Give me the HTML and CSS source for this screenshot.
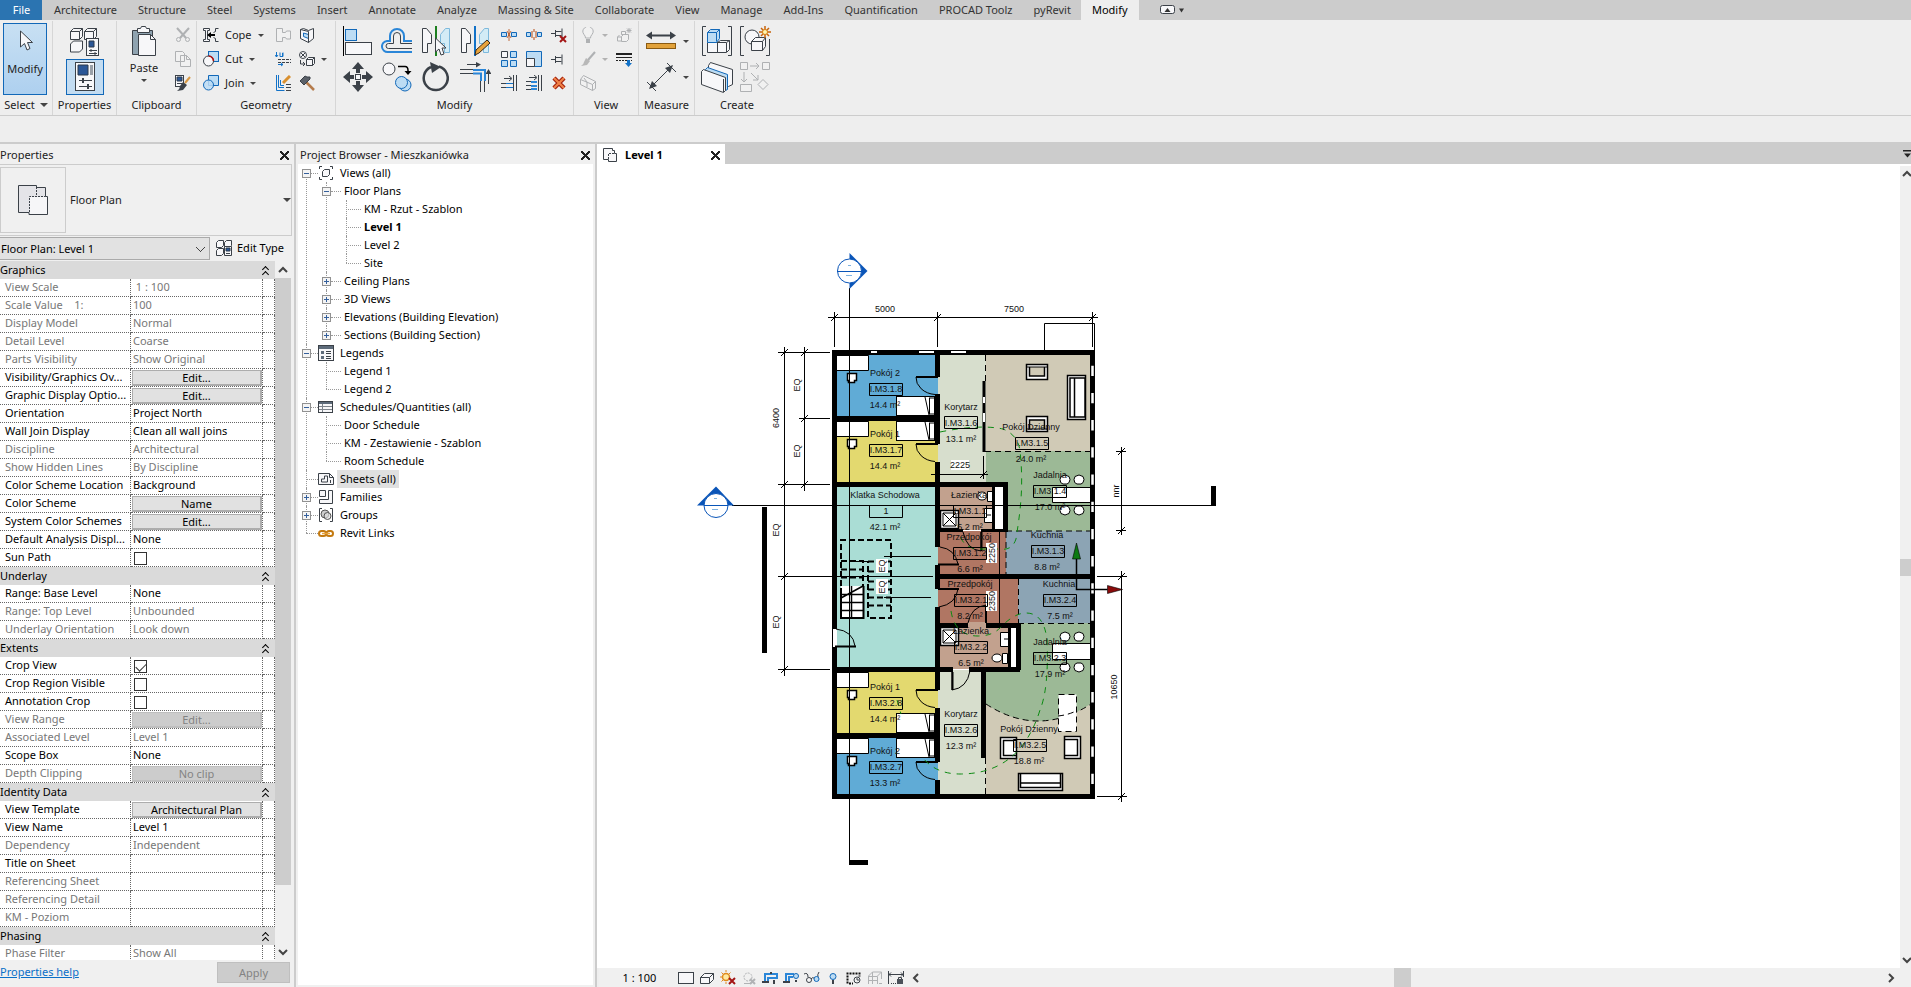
FILE: index.html
```html
<!DOCTYPE html>
<html lang="en">
<head>
<meta charset="utf-8">
<title>Level 1 - Floor Plan</title>
<link rel="stylesheet" href="styles.css">
</head>
<body>
<nav class="tabs" aria-label="Ribbon tabs">
  <button class="tab tab-file">File</button>
  <button class="tab">Architecture</button>
  <button class="tab">Structure</button>
  <button class="tab">Steel</button>
  <button class="tab">Systems</button>
  <button class="tab">Insert</button>
  <button class="tab">Annotate</button>
  <button class="tab">Analyze</button>
  <button class="tab">Massing &amp; Site</button>
  <button class="tab">Collaborate</button>
  <button class="tab">View</button>
  <button class="tab">Manage</button>
  <button class="tab">Add-Ins</button>
  <button class="tab">Quantification</button>
  <button class="tab">PROCAD Toolz</button>
  <button class="tab">pyRevit</button>
  <button class="tab tab-on">Modify</button>
  <button class="tab-toggle" aria-label="Minimize ribbon"><svg width="26" height="12" viewBox="0 0 26 12"><rect class="k" x="1.5" y="1.5" width="14" height="8" rx="2"/><path fill="#333" d="M5.500 8h6l-3-4zM20 4.500h5l-2.500 4z"/></svg></button>
</nav>

<section class="ribbon" aria-label="Modify tools">
  <div class="panel panel-select">
    <div class="panel-body">
      <button class="modify"><svg width="32" height="32" viewBox="0 0 32 32"><path class="k" d="M11.500 7v16l4-3.500 2.500 6.500 3-1.500-2.500-6h5z"/></svg>Modify</button>
    </div>
    <button class="panel-name">Select <i class="down big"></i></button>
  </div>

  <div class="panel">
    <div class="panel-body stack">
      <button class="tool" aria-label="Type properties"><svg width="32" height="32" viewBox="0 0 32 32"><path class="k" d="M1.500 6.500l3-3h9v8l-3 3h-9zM15.500 6.500l3-3h9v8l-3 3h-9zM1.500 19l3-3h9v8l-3 3h-9zM1.500 6.500h9l3-3M15.500 6.500h9l3-3M10.500 6.500v8M24.500 6.500v8"/><rect class="k" x="17.500" y="13.500" width="12" height="17"/><path class="db" d="M20 16h5v6h-5z"/><path class="d" d="M20 25.500h8M20 28.500h8M22 24v3M26 27v3"/></svg></button>
      <button class="tool tool-on" aria-label="Properties"><svg width="32" height="32" viewBox="0 0 32 32"><rect class="k" x="6.500" y="1.500" width="19" height="28"/><path class="db" d="M9 4h10v10H9z"/><path fill="#9aa1a9" d="M21 4h3v10h-3z"/><path class="d" d="M10 19.500h13M10 25.500h13"/><path class="d2" d="M14 17v5M19 23v5"/></svg></button>
    </div>
    <div class="panel-name">Properties</div>
  </div>

  <div class="panel">
    <div class="panel-body clipboard">
      <button class="paste"><svg width="32" height="32" viewBox="0 0 32 32"><path fill="#8fa3b0" stroke="#3b4148" d="M4.500 5.500h20v24h-20z"/><path class="k" d="M9.500 3.500h3l1-2h4l1 2h3v4h-12z"/><path class="k" d="M10.500 9.500h12l5 5v16h-17z"/><path class="d" d="M22.500 9.500v5h5"/></svg>Paste<i class="down"></i></button>
      <button class="tool sm off" aria-label="Cut to clipboard"><svg width="16" height="16" viewBox="0 0 16 16"><path class="d2" d="M2 1l9 10M14 1L5 11"/><circle class="d" cx="3.500" cy="12.500" r="2"/><circle class="d" cx="12.500" cy="12.500" r="2"/></svg></button>
      <button class="tool sm off" aria-label="Copy to clipboard"><svg width="16" height="16" viewBox="0 0 16 16"><path class="k" d="M.5.500h7l2 2v8h-9zM5.500 4.500h6l4 4v7h-10z"/><path class="d" d="M11.500 4.500v4h4"/></svg></button>
      <button class="tool sm" aria-label="Match type"><svg width="16" height="16" viewBox="0 0 16 16"><rect class="k" x=".5" y=".5" width="8" height="11"/><path class="db" d="M2 2h5v4H2z"/><path class="d" d="M2 8.500h5"/><path stroke="#d99a45" stroke-width="2" d="M15 2l-5 6"/><path fill="#3b4148" d="M8 7l4 3-4 5-6 1q3-2 3-5z"/></svg></button>
    </div>
    <div class="panel-name">Clipboard</div>
  </div>

  <div class="panel">
    <div class="panel-body geometry">
      <button class="cmd"><svg width="16" height="16" viewBox="0 0 16 16"><path class="k" d="M.5 1.500h6v2h-2v9h2v2h-6v-2h2v-9h-2z"/><path class="d" d="M15.500 1.500h-3v3l-2 1M15.500 14.500h-3v-3l-2-1"/><path fill="#000" d="M4 8l4-3v2h4v2H8v2z"/></svg>Cope <i class="down"></i></button>
      <button class="tool sm off" aria-label="Join geometry"><svg width="16" height="16" viewBox="0 0 16 16"><path class="k" d="M1.500 1.500h6v4h3l1-1.500h4v8h-4l-1-1.500h-3v4h-6z"/></svg></button>
      <button class="tool sm" aria-label="Split face"><svg width="16" height="16" viewBox="0 0 16 16"><path class="k" d="M1.500 2.500l3-1 5 2 5-2v10l-5 4-8-4z"/><path class="b" d="M4.500 6l5 1.500v4l-5-2z"/><path class="d" d="M1.500 2.500l8 2v11"/></svg></button>
      <button class="cmd"><svg width="16" height="16" viewBox="0 0 16 16"><rect class="b" x="5.500" y=".5" width="10" height="10"/><circle class="k" cx="5.500" cy="10" r="5"/><path d="M5.500 5a5 5 0 0 1 5 5" fill="none" stroke="#b01010" stroke-width="1.500"/></svg>Cut <i class="down"></i></button>
      <button class="tool sm" aria-label="Wall opening"><svg width="16" height="16" viewBox="0 0 16 16"><path class="bl" d="M1.500 1v5M0 4l1.500 2L3 4M5 1.500v4h3v-4M7.500 2v3M3 13.500h5M6 12l2 1.500L6 15"/><path class="d" d="M3 8.500h13M3 11.500h13" stroke-dasharray="3 1"/></svg></button>
      <button class="tool sm more" aria-label="Unjoin"><svg width="16" height="16" viewBox="0 0 16 16"><circle class="k" cx="4" cy="4" r="3.500"/><path class="d" d="M2 2l4 4M6 2L2 6"/><path class="d" d="M1.500 9v4h4M4 11l2 2-2 2"/><path class="k" d="M7.500 8.500l2-2h6v6l-2 2h-6zM7.500 8.500h6v6M13.500 8.500l2-2"/></svg><i class="down"></i></button>
      <button class="cmd"><svg width="16" height="16" viewBox="0 0 16 16"><path class="b" d="M5.500.500h10v10h-10z"/><circle class="b" cx="5.500" cy="10" r="5" fill-opacity=".85"/></svg>Join <i class="down"></i></button>
      <button class="tool sm" aria-label="Beam joins"><svg width="16" height="16" viewBox="0 0 16 16"><path class="bl" d="M3.500 0v12.500H9M5.500 5v5.500H9M1.500 0v15.500h8"/><path class="d" d="M11 9.500h5M11 12.500h5M11 15.500h5"/><path stroke="#d9902f" stroke-width="3" d="M15 1L8 8"/></svg></button>
      <button class="tool sm" aria-label="Demolish"><svg width="16" height="16" viewBox="0 0 16 16"><path stroke="#b57b4b" stroke-width="2.500" d="M7 7l8 8"/><path fill="#5a6068" stroke="#3b4148" d="M1 6l5-5 2 1h3v2L5 10z"/></svg></button>
    </div>
    <div class="panel-name">Geometry</div>
  </div>

  <div class="panel">
    <div class="panel-body modify-tools">
      <div class="bigs">
        <button class="tool" aria-label="Align"><svg width="32" height="32" viewBox="0 0 32 32"><path d="M1.500 1v30" stroke="#000"/><rect class="b" x="3.500" y="4.500" width="11" height="11"/><rect class="k" x="3.500" y="17.500" width="26" height="12"/></svg></button>
        <button class="tool" aria-label="Offset"><svg width="32" height="32" viewBox="0 0 32 32"><path class="bl2" d="M31 27H7a5.500 5.500 0 0 1-1-11h3V11a7 7 0 0 1 14 0v5h8"/><path class="d" d="M31 23.500H7.500a2.500 2.500 0 0 1 0-5h5V11a3.500 3.500 0 0 1 7 0v7.500H31"/></svg></button>
        <button class="tool" aria-label="Mirror by pick axis"><svg width="32" height="32" viewBox="0 0 32 32"><path class="k" d="M2.500 3.500h4l5 6v9h-4v9h-5z"/><path class="b pale" d="M29.500 3.500h-4l-5 6v9h4v9h5z"/><path stroke="#1d8020" stroke-width="2" d="M16 1v30"/><path class="k" d="M15.500 13v14l3.500-3 2 6 3-1-2-6h4z"/></svg></button>
        <button class="tool" aria-label="Mirror by drawn axis"><svg width="32" height="32" viewBox="0 0 32 32"><path class="k" d="M2.500 3.500h4l5 6v9h-4v9h-5z"/><path class="b pale" d="M29.500 3.500h-4l-5 6v9h4v9h5z"/><path stroke="#1272c8" stroke-width="2" d="M16 1v30"/><path fill="#e8a33b" stroke="#3b2a18" d="M16 30l1-5 11-10 3 3-11 10z"/></svg></button>
        <button class="tool" aria-label="Move"><svg width="32" height="32" viewBox="0 0 32 32"><path fill="#3b4148" d="M16 1l6 7h-4v4h-4V8h-4zM16 31l6-7h-4v-4h-4v4h-4zM1 16l7-6v4h4v4H8v4zM31 16l-7-6v4h-4v4h4v4z"/><rect class="k" x="13.500" y="13.500" width="5" height="5"/></svg></button>
        <button class="tool" aria-label="Copy"><svg width="32" height="32" viewBox="0 0 32 32"><circle class="k" cx="8" cy="8" r="6"/><path d="M17 5.500h7q3 0 3 4v2" stroke="#000" stroke-width="1.500" fill="none"/><path d="M23.500 10h7L27 14z"/><circle class="b" cx="24" cy="24" r="6"/><circle class="b" cx="20.500" cy="21.500" r="6"/></svg></button>
        <button class="tool" aria-label="Rotate"><svg width="32" height="32" viewBox="0 0 32 32"><path d="M19 5.500A12 12 0 1 1 11 6" stroke="#3b4148" stroke-width="2.500" fill="none"/><path fill="#3b4148" d="M10 1l11 5-9 6z"/></svg></button>
        <button class="tool" aria-label="Trim to corner"><svg width="32" height="32" viewBox="0 0 32 32"><path class="d" d="M1 8.500h13M1 12.500h13M21.500 19v12M25.500 19v12M8 3.500h12M29.500 10v13"/><path fill="#3b4148" d="M17 1l5 2.500-5 3zM26.500 13l3-5 3 5z"/><path class="bl2" d="M14 9h12v11M14 12.500h8V20" /></svg></button>
      </div>
      <div class="smalls">
        <button class="tool sm" aria-label="Split element"><svg width="16" height="16" viewBox="0 0 16 16"><path class="b" d="M.5 5.500h5v4h-5zM10.500 5.500h5v4h-5z"/><path stroke="#b34a12" d="M8 2v12M6 4l4 7M10 4l-4 7" stroke-width=".8"/></svg></button>
        <button class="tool sm" aria-label="Split with gap"><svg width="16" height="16" viewBox="0 0 16 16"><path class="b" d="M.5 5.500h4v4h-4zM11.500 5.500h4v4h-4z"/><path stroke="#b34a12" d="M6 4v7M10 4v7M8 2v3M8 10v3"/></svg></button>
        <button class="tool sm" aria-label="Unpin"><svg width="16" height="16" viewBox="0 0 16 16"><path class="k" d="M0 6.500h4M4.500 3v7M4.500 4.500h6M4.500 8.500h6M11 1.500v10"/><path class="x" d="M9 9l6 6M15 9l-6 6"/></svg></button>
        <button class="tool sm" aria-label="Array"><svg width="16" height="16" viewBox="0 0 16 16"><path class="k" d="M.5.500h6v6h-6z"/><path class="b" d="M9.500.500h6v6h-6zM.5 9.500h6v6h-6zM9.500 9.500h6v6h-6z"/></svg></button>
        <button class="tool sm" aria-label="Scale"><svg width="16" height="16" viewBox="0 0 16 16"><path class="b" d="M.5.500h15v15h-15z"/><path class="k" d="M.5 7.500h8v8h-8z"/></svg></button>
        <button class="tool sm" aria-label="Pin"><svg width="16" height="16" viewBox="0 0 16 16"><path class="k" d="M0 8.500h4M4.500 5v7M4.500 6.500h6M4.500 10.500h6M11 3.500v10"/></svg></button>
        <button class="tool sm" aria-label="Trim single element"><svg width="16" height="16" viewBox="0 0 16 16"><path class="d" d="M3 3.500h7M12.500 0v16M15.500 0v16M0 8.500h5M0 12.500h5M8 1l3 2.500L8 6"/><path class="bl" d="M5 8.500h7M5 12.500h7"/></svg></button>
        <button class="tool sm" aria-label="Trim multiple elements"><svg width="16" height="16" viewBox="0 0 16 16"><path class="d" d="M3 2.500h7M12.500 0v16M15.500 0v16M0 6.500h5M0 10.500h5M0 14.500h5M8 0l3 2.500L8 5"/><path class="bl2" d="M5 7h6M5 11h6M5 14h6"/></svg></button>
        <button class="tool sm" aria-label="Delete"><svg width="16" height="16" viewBox="0 0 16 16"><path d="M3 3l10 10M13 3L3 13" stroke="#a3200c" stroke-width="4.500"/><path d="M3 3l10 10M13 3L3 13" stroke="#f08248" stroke-width="2.200"/></svg></button>
      </div>
    </div>
    <div class="panel-name">Modify</div>
  </div>

  <div class="panel">
    <div class="panel-body view-tools">
      <button class="tool sm more off" aria-label="Hide in view"><svg width="16" height="16" viewBox="0 0 16 16"><path class="k" d="M5.500 11q0-2-1.500-3.500a5 5 0 1 1 8 0Q10.500 9 10.500 11z"/><path class="d2" d="M6 13h4M6 15h4"/></svg><i class="down"></i></button>
      <button class="tool sm off" aria-label="Displace elements"><svg width="16" height="16" viewBox="0 0 16 16"><path class="k" d="M5.500 9.500l2-2h5v5l-2 2h-5zM1.500 10l2-2M1.500 10h4v4h-4zM5.500 4.500h4v3h-4zM13 1v5M10.500 3.500h5M11 1.500l4 4M15 1.500l-4 4"/></svg></button>
      <button class="tool sm more off" aria-label="Override graphics"><svg width="16" height="16" viewBox="0 0 16 16"><path class="d2" d="M15 1L8 9"/><path fill="#555" d="M6 7l4 3-3 4-6 1q3-2 3-4z"/></svg><i class="down"></i></button>
      <button class="tool sm" aria-label="Linework"><svg width="16" height="16" viewBox="0 0 16 16"><path stroke="#222" stroke-width="2" d="M0 3h16"/><path stroke="#222" d="M0 6.500h16"/><path stroke="#222" stroke-dasharray="2 1" d="M0 9.500h16"/><path fill="#1272c8" d="M11 9h3v3h2l-3.500 4L9 12h2z"/></svg></button>
      <button class="tool sm off" aria-label="Selection box"><svg width="16" height="16" viewBox="0 0 16 16"><path class="k" d="M.5 4.500l3-4 12 6v7l-3 2-12-6zM.5 4.500l12 5v6M12.500 9.500l3-3M4 3l3 4v5"/></svg></button>
    </div>
    <div class="panel-name">View</div>
  </div>

  <div class="panel">
    <div class="panel-body measure">
      <button class="tool more" aria-label="Measure"><svg width="32" height="32" viewBox="0 0 32 32"><path class="d2" d="M5 10.500h22"/><path fill="#3b4148" d="M1 10.500l6-4v8zM31 10.500l-6-4v8z"/><rect x="1.500" y="18.500" width="29" height="5" fill="#e2a23a" stroke="#8a5a12"/></svg><i class="down"></i></button>
      <button class="tool more" aria-label="Aligned dimension"><svg width="32" height="32" viewBox="0 0 32 32"><path class="d" d="M7 25L25 7M2 21l9 9M22 2l9 9"/><path fill="#3b4148" d="M4 28l3-8 5 5zM28 4l-8 3 5 5z"/></svg><i class="down"></i></button>
    </div>
    <div class="panel-name">Measure</div>
  </div>

  <div class="panel panel-last">
    <div class="panel-body create">
      <button class="tool" aria-label="Create assembly"><svg width="32" height="32" viewBox="0 0 32 32"><path class="d" d="M5 1.500H1.500v29H5M27 1.500h3.500v29H27"/><path class="k" d="M6.500 17.500h10v10h-10zM16.500 17.500l3-2h9v9l-3 3h-9zM25.500 18v9M16.500 17.500h9l3-2"/><path class="b" d="M6.500 7.500l3-3h9v9l-3 4h-9zM6.500 7.500h9v9M15.500 7.500l3-3"/></svg></button>
      <button class="tool" aria-label="Create group"><svg width="32" height="32" viewBox="0 0 32 32"><path class="d" d="M5 1.500H1.500v29H5M27 30.500h3.500V14"/><circle class="k" cx="13" cy="12" r="7"/><path class="k" d="M12.500 16.500l4-4h10v9l-3 4h-11zM12.500 16.500h11v9M23.500 16.500l3-4"/><path d="M26 1v12M20 7h12M22 3l8 8M30 3l-8 8" stroke="#c8640c" stroke-width="1.500"/><circle cx="26" cy="7" r="2.500" fill="#fff6b0" stroke="#d98012"/></svg></button>
      <button class="tool" aria-label="Create parts"><svg width="32" height="32" viewBox="0 0 32 32"><path class="k" d="M7.500 4.500l2-3 22 7v15l-4 2-20-7z"/><path class="b" d="M4.500 8.500l2-2 20 7v15l-2 1-20-7z"/><path class="k" d="M.5 10.500l2-2 22 8v13l-2 2-22-8zM22.500 18v13"/></svg></button>
      <button class="tool off" aria-label="Create similar"><svg width="32" height="32" viewBox="0 0 32 32"><path class="k" d="M1.500 1.500h7v7h-7zM23.500 1.500h7v7h-7zM1.500 23.500h11v7h-11zM19 23.500l5-5 5 5-5 5z"/><path class="d" d="M11 5h9M17 2l3 3-3 3M5 11v10M2 18l3 3 3-3M12 12l7 7M19 14v5h-5"/></svg></button>
    </div>
    <div class="panel-name">Create</div>
  </div>
</section>

<div class="options"></div>

<main class="work">
  <section class="dock" aria-label="Properties">
    <header class="dock-title"><span>Properties</span><button class="close" aria-label="Close properties"></button></header>
    <button class="type-picker">
      <span class="thumb"><svg width="32" height="32" viewBox="0 0 32 32"><path fill="#e4e4e8" stroke="#3b4148" d="M1.500 1.500h18v2h9v9h2v18h-18.500v-2h-10.500z"/><path fill="#f6f6f8" d="M13 13h17v17H13z"/><path class="d" stroke-dasharray="2 1" d="M19.500 3v10M12.500 28V12.500h16"/></svg></span>
      <span class="type-name">Floor Plan</span><i class="down big"></i>
    </button>
    <div class="filter">
      <select aria-label="Element filter"><option>Floor Plan: Level 1</option></select>
      <button class="edit-type"><svg width="16" height="16" viewBox="0 0 16 16"><path class="k" d="M.5 2.500l2-2h5v5l-2 2h-5zM8.500 2.500l2-2h5v5l-2 2h-5zM.5 10.500l2-2h5v5l-2 2h-5z"/><path class="k" d="M8.500 6.500h7v9h-7z"/><path class="db" d="M10 8h4v3h-4z"/><path class="d" d="M10 13.500h4"/></svg>Edit Type</button>
    </div>
    <div class="grid-wrap">
      <div class="grid-clip">
      <table class="grid">
        <colgroup><col class="c-name"><col class="c-value"><col class="c-link"></colgroup>
        <tbody>
        <tr class="group"><th colspan="3">Graphics<b></b></th></tr>
        <tr class="ro"><td>View Scale</td><td>&nbsp;1 : 100</td><td></td></tr>
        <tr class="ro"><td>Scale Value &nbsp;&nbsp; 1:</td><td>100</td><td></td></tr>
        <tr class="ro"><td>Display Model</td><td>Normal</td><td></td></tr>
        <tr class="ro"><td>Detail Level</td><td>Coarse</td><td></td></tr>
        <tr class="ro"><td>Parts Visibility</td><td>Show Original</td><td></td></tr>
        <tr><td>Visibility/Graphics Ov...</td><td><button>Edit...</button></td><td></td></tr>
        <tr><td>Graphic Display Optio...</td><td><button>Edit...</button></td><td></td></tr>
        <tr><td>Orientation</td><td>Project North</td><td></td></tr>
        <tr><td>Wall Join Display</td><td>Clean all wall joins</td><td></td></tr>
        <tr class="ro"><td>Discipline</td><td>Architectural</td><td></td></tr>
        <tr class="ro"><td>Show Hidden Lines</td><td>By Discipline</td><td></td></tr>
        <tr><td>Color Scheme Location</td><td>Background</td><td></td></tr>
        <tr><td>Color Scheme</td><td><button>Name</button></td><td></td></tr>
        <tr><td>System Color Schemes</td><td><button>Edit...</button></td><td></td></tr>
        <tr><td>Default Analysis Displ...</td><td>None</td><td></td></tr>
        <tr><td><label for="sun">Sun Path</label></td><td><input id="sun" type="checkbox"></td><td></td></tr>
        <tr class="group"><th colspan="3">Underlay<b></b></th></tr>
        <tr><td>Range: Base Level</td><td>None</td><td></td></tr>
        <tr class="ro"><td>Range: Top Level</td><td>Unbounded</td><td></td></tr>
        <tr class="ro"><td>Underlay Orientation</td><td>Look down</td><td></td></tr>
        <tr class="group"><th colspan="3">Extents<b></b></th></tr>
        <tr><td><label for="crop">Crop View</label></td><td><input id="crop" type="checkbox" checked></td><td></td></tr>
        <tr><td><label for="region">Crop Region Visible</label></td><td><input id="region" type="checkbox"></td><td></td></tr>
        <tr><td><label for="anno">Annotation Crop</label></td><td><input id="anno" type="checkbox"></td><td></td></tr>
        <tr class="ro"><td>View Range</td><td><button disabled>Edit...</button></td><td></td></tr>
        <tr class="ro"><td>Associated Level</td><td>Level 1</td><td></td></tr>
        <tr><td>Scope Box</td><td>None</td><td></td></tr>
        <tr class="ro"><td>Depth Clipping</td><td><button disabled>No clip</button></td><td></td></tr>
        <tr class="group"><th colspan="3">Identity Data<b></b></th></tr>
        <tr><td>View Template</td><td><button>Architectural Plan</button></td><td></td></tr>
        <tr><td>View Name</td><td>Level 1</td><td></td></tr>
        <tr class="ro"><td>Dependency</td><td>Independent</td><td></td></tr>
        <tr><td>Title on Sheet</td><td></td><td></td></tr>
        <tr class="ro"><td>Referencing Sheet</td><td></td><td></td></tr>
        <tr class="ro"><td>Referencing Detail</td><td></td><td></td></tr>
        <tr class="ro"><td>KM - Poziom</td><td></td><td></td></tr>
        <tr class="group"><th colspan="3">Phasing<b></b></th></tr>
        <tr class="ro"><td>Phase Filter</td><td>Show All</td><td></td></tr>
        </tbody>
      </table>
      </div>
      <div class="vbar"><svg width="16" height="17" viewBox="0 0 16 17"><path class="chev" d="M4 11l4-4 4 4"/></svg><span class="thumb-v"></span><svg width="16" height="17" viewBox="0 0 16 17"><path class="chev" d="M4 7l4 4 4-4"/></svg></div>
    </div>
    <footer class="dock-foot"><a href="#help">Properties help</a><button disabled>Apply</button></footer>
  </section>

  <section class="dock" aria-label="Project Browser">
    <header class="dock-title pb"><span>Project Browser - Mieszkaniówka</span><button class="close" aria-label="Close project browser"></button></header>
    <ul class="tree">
      <li><div class="node"><button class="exp" aria-label="Collapse"></button><i></i><svg width="16" height="16" viewBox="0 0 16 16"><path class="d" d="M4 1.500H1.500V4M12 1.500h2.500V4M4 14.500H1.500V12M12 14.500h2.500V12"/><path class="k" d="M4.500 6.500l2-2h5v5l-2 2h-5z"/></svg><span>Views (all)</span></div>
        <ul>
          <li><div class="node"><button class="exp" aria-label="Collapse"></button><i></i><span>Floor Plans</span></div>
            <ul>
              <li><div class="node"><i></i><span>KM - Rzut - Szablon</span></div></li>
              <li><div class="node"><i></i><span><b>Level 1</b></span></div></li>
              <li><div class="node"><i></i><span>Level 2</span></div></li>
              <li><div class="node"><i></i><span>Site</span></div></li>
            </ul></li>
          <li><div class="node"><button class="exp plus" aria-label="Expand"></button><i></i><span>Ceiling Plans</span></div></li>
          <li><div class="node"><button class="exp plus" aria-label="Expand"></button><i></i><span>3D Views</span></div></li>
          <li><div class="node"><button class="exp plus" aria-label="Expand"></button><i></i><span>Elevations (Building Elevation)</span></div></li>
          <li><div class="node"><button class="exp plus" aria-label="Expand"></button><i></i><span>Sections (Building Section)</span></div></li>
        </ul></li>
      <li><div class="node"><button class="exp" aria-label="Collapse"></button><i></i><svg width="16" height="16" viewBox="0 0 16 16"><rect class="k" x=".5" y=".5" width="15" height="15"/><path fill="#5d6b7a" d="M1 1h14v3H1zM3 6h3v3H3zM3 11h3v3H3z"/><path class="d" d="M8 6.500h5M8 8.500h5M8 11.500h5M8 13.500h5"/></svg><span>Legends</span></div>
        <ul>
          <li><div class="node"><i></i><span>Legend 1</span></div></li>
          <li><div class="node"><i></i><span>Legend 2</span></div></li>
        </ul></li>
      <li><div class="node"><button class="exp" aria-label="Collapse"></button><i></i><svg width="16" height="16" viewBox="0 0 16 16"><rect class="k" x=".5" y="2.500" width="14" height="11"/><path fill="#5d6b7a" d="M1 3h13v2H1z"/><path stroke="#7d848c" d="M4.500 5v8M1 7.500h13M1 10.500h13"/></svg><span>Schedules/Quantities (all)</span></div>
        <ul>
          <li><div class="node"><i></i><span>Door Schedule</span></div></li>
          <li><div class="node"><i></i><span>KM - Zestawienie - Szablon</span></div></li>
          <li><div class="node"><i></i><span>Room Schedule</span></div></li>
        </ul></li>
      <li><div class="node"><i></i><svg width="16" height="16" viewBox="0 0 16 16"><path class="k" d="M.5 2.500h11l4 4v7h-15z"/><path class="d" d="M11.500 2.500v4h4M3.500 8h3V5h3v6h-6zM12.500 9v3"/></svg><span class="picked">Sheets (all)</span></div></li>
      <li><div class="node"><button class="exp plus" aria-label="Expand"></button><i></i><svg width="16" height="16" viewBox="0 0 16 16"><path class="k" d="M1.500 1.500h6v6h-6zM10.500 1.500h4v13h-13v-4h9z"/></svg><span>Families</span></div></li>
      <li><div class="node"><button class="exp plus" aria-label="Expand"></button><i></i><svg width="16" height="16" viewBox="0 0 16 16"><path class="d" d="M4 1.500H1.500v13H4M12 1.500h2.500v13H12"/><circle cx="7" cy="7" r="4" fill="#ccc" stroke="#555"/><circle cx="9.500" cy="9" r="3.500" fill="#ddd" fill-opacity=".7" stroke="#555"/></svg><span>Groups</span></div></li>
      <li><div class="node"><i></i><svg width="16" height="16" viewBox="0 0 16 16"><rect x="1" y="6" width="7" height="5" rx="2.500" fill="none" stroke="#c47a10" stroke-width="2"/><rect x="8.500" y="6" width="6.500" height="5" rx="2.500" fill="none" stroke="#c47a10" stroke-width="2"/><path d="M4 8.500h8" stroke="#e8a33b" stroke-width="1.500"/></svg><span>Revit Links</span></div></li>
    </ul>
  </section>

  <section class="view" aria-label="Drawing area">
    <header class="view-tabs">
      <div class="view-tab"><svg width="16" height="16" viewBox="0 0 16 16"><path class="k" d="M1.500 1.500h9v2h2v3h2v8h-8v-2h-5z"/><path class="d" stroke-dasharray="2 1" d="M6.500 12V6.500h7"/></svg><b>Level 1</b><button class="close" aria-label="Close view"></button></div>
      <button class="overflow" aria-label="More views"><svg width="8" height="10" viewBox="0 0 8 10"><path d="M0 1h8v1.500H0zM1 4.500h7l-3.500 4z" fill="#222"/></svg></button>
    </header>
    <div class="canvas">
      <div class="sheet">
      <svg class="plan" width="540" height="640" viewBox="690 240 540 640" role="img" aria-label="Floor plan of Level 1">
        <defs>
          <g id="seat"><path d="M-4-3.500q4-3 8 0l1 3q-.500 4-3 4.500h-4q-3-.500-3-4.500z" class="w"/></g>
          <g id="seat2"><path d="M-4 3.500q4 3 8 0l1-3q-.500-4-3-4.500h-4q-3 .500-3 4.500z" class="w"/></g>
          <g id="stool"><path d="M.5.500h9v7h-2v2h-6v-2h-1z" class="w" stroke-width="1.500"/></g>
          <g id="bed"><rect class="w" x=".5" y=".5" width="38" height="19"/><path class="n" d="M29 1l4 18"/><rect class="w" x="33.500" y="2" width="5" height="16"/></g>
          <g id="door"><path class="n" d="M-21 0a21 17 0 0 0 19 17.500"/><path stroke="#000" stroke-width="2" d="M-21 0H1"/></g>
          <g id="arm"><path class="w" d="M.5.500h21v15h-21zM3.500 3v9h15v-9" stroke-width="1.500"/><path class="n" d="M.5 3h21"/></g>
          <g id="shower"><path class="w" stroke-width="1.500" d="M.5.500h18v18h-18z"/><path class="n" d="M3 3l13 13M16 3L3 16M3 3h13v13H3z"/></g>
          <g id="toilet"><ellipse class="w" cx="5" cy="5" rx="5" ry="4"/><path class="w" d="M10.500.500h5v10h-5z"/></g>
        </defs>

        <!-- room fills -->
        <path fill="#60abd6" d="M835 353h103v66H835zM835 736h103v60H835z"/>
        <path fill="#e3d96f" d="M835 419h103v66H835zM835 670h103v66H835z"/>
        <path fill="#aaddd5" d="M835 485h103v185H835z"/>
        <path fill="#d7decd" d="M938 353h48v131h-48zM938 670h48v126h-48z"/>
        <path fill="#d0cab6" d="M986 353h106v98H986zM986 690h106v106H986z"/>
        <path fill="#9cb996" d="M986 451h106v80h-86v-47h-20zM1018 623h74v80q-54 36-106 1v-34h32z"/>
        <path fill="#8ca4b4" d="M1006 531h86v45h-86zM1018 577h74v46h-74z"/>
        <path fill="#b07663" d="M938 531h68v45h-68zM938 577h80v49h-80z"/>
        <path fill="#c2a18e" d="M938 485h56v45h-56zM938 626h72v43h-72z"/>
        <path fill="#c2a18e" d="M968 622h18v6h-18z"/>
        <path class="dash" d="M985.500 355v26M985 451.500h106M1006 531h85M1006 532v42M1018.500 579v44M1018 623.500h73M985.500 758v36M986 704q52 34 105 0"/>

        <!-- furniture -->
        <path class="w" d="M836.500 355.500h32v15h-32zM836.500 421.500h32v15h-32zM836.500 672.500h32v15h-32zM836.500 738.500h32v15h-32z"/>
        <use href="#stool" x="847" y="373"/><use href="#stool" x="847" y="439"/><use href="#stool" x="847" y="690"/><use href="#stool" x="847" y="756"/>
        <use href="#bed" x="896" y="396"/><use href="#bed" x="896" y="421"/><use href="#bed" x="896" y="713"/><use href="#bed" x="896" y="738"/>
        <use href="#arm" x="1026" y="364"/>
        <use href="#arm" transform="translate(1026 432) scale(1 -1)"/>
        <path class="w" stroke-width="1.500" d="M1067.500 375.500h18v44h-18zM1070 378h15v39h-15zM1074.500 378v39"/>
        <path class="w" d="M1052.500 487.500h38v15h-38zM1052.500 643.500h38v16h-38z"/>
        <use href="#seat" x="1065" y="480"/><use href="#seat" x="1079" y="480"/><use href="#seat2" x="1065" y="510"/><use href="#seat2" x="1079" y="510"/>
        <use href="#seat" x="1065" y="637"/><use href="#seat" x="1079" y="637"/><use href="#seat2" x="1065" y="667"/><use href="#seat2" x="1079" y="667"/>
        <path class="w" stroke-dasharray="6 4" d="M1058.500 694.500h18v37h-18z"/>
        <path class="dash" d="M1058 716q10-1 18-5"/>
        <path class="w" stroke-width="1.500" d="M1000.500 737.500h16v21h-16zM1003.500 740.500h13v15h-13zM1064.500 736.500h16v22h-16zM1064.500 739.500h13v16h-13z"/>
        <path class="w" stroke-width="1.500" d="M1018.500 773.500h44v17h-44zM1020.500 773.500h40v14h-40zM1020.500 783h40"/>
        <use href="#shower" x="940" y="510"/><use href="#shower" x="940" y="627"/>
        <use href="#toilet" x="977" y="491"/><use href="#toilet" x="992" y="653"/>
        <path class="w" d="M984.500 508.500h8v14h-8zM1000.500 632.500h8v14h-8z"/><path class="n" d="M987 515h4M1004 639h4"/>
        <path fill="#fff" d="M994 486h10v43h-10zM1010 627h7v41h-7z"/>

        <!-- stairs -->
        <path fill="#fff" d="M841 586h22v32h-22z"/>
        <path class="n" d="M841 594.500h22M841 602.500h22M841 610.500h22M851.500 586v32M841 598l22-12" stroke-width="1.500"/>
        <path fill="none" stroke="#000" stroke-width="2" d="M841 588v30h22.500v-32"/>
        <path fill="none" stroke="#000" stroke-width="2" stroke-dasharray="6 3" d="M841 586v-46h50v78h-23v-57M841 561h22v25M841 569.500h22M841 577.500h22M868 561.500h23M868 571.500h23M868 581.500h23M868 589.500h23M868 597.500h23M868 605.500h23"/>
        <path class="n" d="M884 556.500h47M884 597.500h47M852 561.500h20"/>
        <path fill="#fff" d="M876 559h12v14h-12zM876 579h12v15h-12z"/>

        <!-- walls -->
        <path class="wall" d="M834.500 352.500h258v444h-258zM833 418.500h106M833 484.500h175M937.500 353v24M937.500 394v50M937.500 462v85M937.500 565v24M937.500 607v83M937.500 708v54M937.500 780v16M937 576.500h155M833 669.500h120M969 669.500h51M833 735.500h106M1005.500 484v48M1018.500 624v46M937 625.500h31M986 625.500h34M983.500 672v86"/>
        <path class="wall3" d="M984 381v71M993.500 486v44M1009.500 626v42M937 530.500h26M981 530.500h26"/>
        <path stroke="#fff" stroke-width="2" fill="none" d="M871 352h6M919 352h15M951 352h15M984 397v6M984 413v9"/>
        <path stroke="#fff" stroke-width="2.500" stroke-dasharray="10.300 16.900" d="M1092.500 365.700v420"/>
        <path fill="#fff" d="M833 629h4v18h-4z"/>

        <!-- doors -->
        <use href="#door" x="937" y="377"/><use href="#door" x="937" y="444"/><use href="#door" x="937" y="690"/><use href="#door" x="937" y="762"/>
        <path class="n" d="M940 547q15 2 18 17M958 589q-2 15-19 18M981 532v19q-14-1-18-19M986 623v-18q-15 2-18 18M952 672v18q15-2 18-19M836 629q17 2 19 17"/>
        <path stroke="#000" stroke-width="2" d="M938 564.500h21M938 589h21M981.500 532v19M986 605v18M952.500 672v18M835 646.500h21"/>
        <path class="n" d="M999.500 532v42M999.500 579v44M983.500 456v23"/>

        <!-- circulation paths -->
        <path class="route" d="M940 432q40-8 63-3 15 6 17 22c4 36 0 62-4 88q-4 12-16 10h-23q-14-2-17-14M951 611q4 25 27 25 14 0 22-8 14-15 26-15 18 0 21 27 2 48-7 70-20 64-80 64-24 0-37-16"/>
        <path class="route" d="M897 700l4 14"/>

        <!-- dimensions -->
        <path class="n" d="M828 317.500h270M834.500 312v35M937.500 312v35M1092.500 312v35M1044.500 350v-26.500h50v26.500"/>
        <path class="n" d="M784.500 347v329M804.500 347v144M778 352.500h52M799 418.500h31M778 484.500h52M778 576.500h155M778 669.500h52M931 474.500h57"/>
        <path class="n" d="M1121.500 447v88M1121.500 571v231M1116 451.500h10M1116 530.500h10M1097 576.500h30M1097 796.500h30"/>
        <path class="n" d="M831 321l7-7M934 321l7-7M1089 321l7-7M781 356l7-7M801 356l7-7M801 422l7-7M801 488l7-7M781 488l7-7M781 580l7-7M781 673l7-7M1118 455l7-7M1118 534l7-7M1118 580l7-7M1118 800l7-7M980 478l7-7"/>
        <path fill="#fff" d="M951 460h18v10h-18zM986 543h11v20h-11zM986 591h11v20h-11z"/>
        <g class="t">
          <text x="885" y="312">5000</text><text x="1014" y="312">7500</text><text x="960" y="468">2225</text>
          <text transform="translate(800 385) rotate(-90)">EQ</text>
          <text transform="translate(800 451) rotate(-90)">EQ</text>
          <text transform="translate(779 418) rotate(-90)">6400</text>
          <text transform="translate(779 530) rotate(-90)">EQ</text>
          <text transform="translate(779 622) rotate(-90)">EQ</text>
          <text transform="translate(885 566) rotate(-90)">EQ</text>
          <text transform="translate(885 587) rotate(-90)">EQ</text>
          <text transform="translate(995 553) rotate(-90)">2250</text>
          <text transform="translate(995 601) rotate(-90)">2350</text>
          <text transform="translate(1117 687) rotate(-90)">10650</text>
          <text transform="translate(1119 491) rotate(-90)">nnr</text>
        </g>

        <!-- room tags -->
        <path class="n" d="M869.500 383.500h33v12h-33zM869.500 444.500h33v12h-33zM944.500 416.500h33v12h-33zM1015.500 437.500h33v12h-33zM1033.500 485.500h33v12h-33zM869.500 505.500v12h33v-12M953.500 505.500h33v12h-33zM953.500 547.500h33v12h-33zM1031.500 545.500h33v12h-33zM954.500 594.500h33v12h-33zM1043.500 594.500h33v12h-33zM954.500 641.500h33v12h-33zM1033.500 652.500h33v12h-33zM869.500 697.500h33v12h-33zM869.500 761.500h33v12h-33zM944.500 724.500h33v12h-33zM1013.500 739.500h33v12h-33z"/>
        <g class="t">
          <text x="885" y="376">Pokój 2</text><text x="886" y="392">I.M3.1.8</text><text x="885" y="408">14.4 m²</text>
          <text x="885" y="437">Pokój 1</text><text x="886" y="453">I.M3.1.7</text><text x="885" y="469">14.4 m²</text>
          <text x="961" y="410">Korytarz</text><text x="961" y="426">I.M3.1.6</text><text x="961" y="442">13.1 m²</text>
          <text x="1031" y="430">Pokój Dzienny</text><text x="1032" y="446">I.M3.1.5</text><text x="1031" y="462">24.0 m²</text>
          <text x="1050" y="478">Jadalnia</text><text x="1050" y="494">I.M3.1.4</text><text x="1050" y="510">17.0 m²</text>
          <text x="885" y="498">Klatka Schodowa</text><text x="886" y="514">1</text><text x="885" y="530">42.1 m²</text>
          <text x="969" y="498">Łazienka</text><text x="970" y="514">I.M3.1.1</text><text x="970" y="530">5.2 m²</text>
          <text x="969" y="540">Przedpokój</text><text x="970" y="556">I.M3.1.2</text><text x="970" y="572">6.6 m²</text>
          <text x="1047" y="538">Kuchnia</text><text x="1048" y="554">I.M3.1.3</text><text x="1047" y="570">8.8 m²</text>
          <text x="970" y="587">Przedpokój</text><text x="971" y="603">I.M3.2.1</text><text x="970" y="619">8.2 m²</text>
          <text x="1059" y="587">Kuchnia</text><text x="1060" y="603">I.M3.2.4</text><text x="1060" y="619">7.5 m²</text>
          <text x="971" y="634">Łazienka</text><text x="971" y="650">I.M3.2.2</text><text x="971" y="666">6.5 m²</text>
          <text x="1050" y="645">Jadalnia</text><text x="1050" y="661">I.M3.2.3</text><text x="1050" y="677">17.9 m²</text>
          <text x="885" y="690">Pokój 1</text><text x="886" y="706">I.M3.2.8</text><text x="885" y="722">14.4 m²</text>
          <text x="885" y="754">Pokój 2</text><text x="886" y="770">I.M3.2.7</text><text x="885" y="786">13.3 m²</text>
          <text x="961" y="717">Korytarz</text><text x="961" y="733">I.M3.2.6</text><text x="961" y="749">12.3 m²</text>
          <text x="1029" y="732">Pokój Dzienny</text><text x="1030" y="748">I.M3.2.5</text><text x="1029" y="764">18.8 m²</text>
        </g>

        <!-- section marks -->
        <path class="n" d="M849.500 288v576M732 505.500h482"/>
        <path fill="#000" d="M849 860h19v5h-19zM762 507h5v146h-5zM1211 486h5v20h-5z"/>
        <path fill="#0a55b8" d="M849.500 253l18 18-18 18zM697 505.500l19-19 18 19z"/>
        <g fill="#fff" stroke="#0a55b8"><circle cx="849.500" cy="271" r="12"/><circle cx="716" cy="505.500" r="12"/><path d="M837 271.500h25M704 505.500h24"/></g>
        <path stroke="#7fb2e0" d="M848 265.500h3M846 275.500h6M714 498.500h3M712 509.500h6"/>

        <!-- origin arrows -->
        <path fill="none" stroke="#000" stroke-width="1.500" d="M1076.500 558v31.500h31"/>
        <path fill="#0c7a12" stroke="#000" stroke-width=".6" d="M1076.500 543l4 16h-8z"/>
        <path fill="#8a0a0a" stroke="#000" stroke-width=".6" d="M1122.500 589.500l-15-4v8z"/>
      </svg>
      </div>
      <div class="vbar vbar-view"><svg width="11" height="17" viewBox="0 0 11 17"><path class="chev" d="M3 10l4-4 4 4"/></svg><span class="thumb-s"></span><svg width="11" height="17" viewBox="0 0 11 17"><path class="chev" d="M3 7l4 4 4-4"/></svg></div>
    </div>
    <footer class="view-bar">
      <button class="scale">1 : 100</button>
      <button class="vb" aria-label="Detail level"><svg width="16" height="16" viewBox="0 0 16 16"><rect class="k" x=".5" y="2.500" width="15" height="11"/></svg></button>
      <button class="vb" aria-label="Visual style"><svg width="16" height="16" viewBox="0 0 16 16"><path class="k" d="M1.500 7.500l4-4h9v6l-4 4h-9zM1.500 7.500h9v6M10.500 7.500l4-4"/></svg></button>
      <button class="vb" aria-label="Sun path off"><svg width="16" height="16" viewBox="0 0 16 16"><circle cx="6" cy="7" r="3.500" fill="#ffe9a0" stroke="#e08a1c" stroke-width="1.500"/><path stroke="#e08a1c" d="M6 0v2M0 7h2M1.500 2.500L3 4M10.500 2.500L9 4M1.500 11.500L3 10M6 12v2"/><path class="x" d="M9 8l6 6M15 8l-6 6"/></svg></button>
      <button class="vb off" aria-label="Shadows off"><svg width="16" height="16" viewBox="0 0 16 16"><circle class="d" cx="7" cy="7" r="4" stroke-dasharray="2 1"/><path class="d" d="M3 13.500h6"/><path class="d2" d="M9 9l5 5M14 9l-5 5"/></svg></button>
      <button class="vb" aria-label="Crop view"><svg width="16" height="16" viewBox="0 0 16 16"><path class="bl2" d="M3 13V4h12v4H6v5"/><path class="d2" d="M0 12h7M12 10v4M9 4V2"/></svg></button>
      <button class="vb" aria-label="Show crop region"><svg width="16" height="16" viewBox="0 0 16 16"><path class="bl2" d="M3 13V4h8M6 13V7h4"/><path class="d2" d="M0 12h7"/><circle class="b" cx="13" cy="6" r="2.500"/><path class="d2" d="M12 11h2"/></svg></button>
      <button class="vb" aria-label="Temporary hide"><svg width="16" height="16" viewBox="0 0 16 16"><path class="d" d="M0 4q4-2 4 3M15 2q-2 3-1 5M7 9q1-2 3-1"/><circle class="k" cx="5" cy="10" r="2.500"/><circle class="b" cx="12.500" cy="9" r="2.500"/></svg></button>
      <button class="vb" aria-label="Reveal hidden elements"><svg width="16" height="16" viewBox="0 0 16 16"><circle class="b" cx="8" cy="6.500" r="3"/><path class="d2" d="M7 11h2M7 13h2"/></svg></button>
      <button class="vb" aria-label="View properties"><svg width="16" height="16" viewBox="0 0 16 16"><path d="M1.500 13.500v-10h12v3M3 13.500h4" stroke="#111" stroke-width="2" stroke-dasharray="2 1" fill="none"/><circle class="d" cx="11" cy="10" r="3"/><path class="d" d="M11 8v2h2"/></svg></button>
      <button class="vb off" aria-label="Analytical model"><svg width="16" height="16" viewBox="0 0 16 16"><path class="d" d="M1.500 14V6l4-4h9v7M1.500 6.500h9V14M1.500 10.500h9M5.500 6v8M5.500 2v4M10.500 6l4-4M12 13.500h3"/></svg></button>
      <button class="vb" aria-label="Reveal constraints"><svg width="16" height="16" viewBox="0 0 16 16"><path class="d" d="M.5 1v13M15.500 1v6M1 4.500h14M3 2.500l-2 2 2 2M13 2.500l2 2-2 2" /><path class="d" stroke-dasharray="1 1" d="M3 13.500h5"/><path fill="#4a5058" d="M9 9h6v5H9z"/><path class="d" d="M10.500 9V7.500h3V9"/></svg></button>
      <button class="vb" aria-label="Collapse bar"><svg width="10" height="16" viewBox="0 0 10 16"><path class="chev" d="M6 4L2 8l4 4"/></svg></button>
      <div class="hbar"><span></span></div>
      <svg class="hend" width="16" height="16" viewBox="0 0 16 16"><path class="chev" d="M6 4l4 4-4 4"/></svg>
    </footer>
  </section>
</main>
</body>
</html>
```
FILE: styles.css
```css
* { box-sizing: border-box; }
body {
  margin: 0;
  height: 100vh;
  display: flex;
  flex-direction: column;
  overflow: hidden;
  background: #eee;
  color: #222;
  font: 11px/18px "Noto Sans", "Open Sans", sans-serif;
}
button {
  font: inherit;
  color: inherit;
  background: none;
  border: 0;
  padding: 0;
  margin: 0;
}
svg { display: block; flex: none; }

/* icon strokes */
.k { fill: #f7f7f9; stroke: #3b4148; }
.d { fill: none; stroke: #3b4148; }
.d2 { fill: none; stroke: #3b4148; stroke-width: 2; }
.b { fill: #bcdcf4; stroke: #1268b8; }
.pale { fill: #d3ecf6; stroke: #7db9dc; }
.bl { fill: none; stroke: #1272c8; }
.bl2 { fill: none; stroke: #2a86d8; stroke-width: 2; }
.db { fill: #2b5797; stroke: #2c3a4c; }
.x { fill: none; stroke: #a31515; stroke-width: 2; }
.chev { fill: none; stroke: #444; stroke-width: 2; }
.off { opacity: .35; }
.down {
  display: inline-block;
  flex: none;
  border: 3px solid transparent;
  border-top-color: #444;
  border-bottom: 0;
}
.down.big { border-width: 4px; border-bottom: 0; }

/* ribbon tabs */
.tabs { display: flex; height: 20px; flex: none; background: #ccc; }
.tab { padding: 0 10px 0 11px; line-height: 18px; white-space: nowrap; color: #333; }
.tab-file { background: #2b74b1; color: #fff; width: 42px; margin-right: 1px; }
.tab-on { background: #eee; color: #000; padding-right: 11px; }
.tab-toggle { margin-left: 20px; }

/* ribbon */
.ribbon {
  display: grid;
  grid-template-columns: 53px 64px 80px 139px 238px 65px 56px 84px;
  height: 96px;
  flex: none;
  padding-top: 1px;
  border-bottom: 1px solid #ccc;
}
.panel {
  display: flex;
  flex-direction: column;
  padding-top: 2px;
  border-right: 1px solid #d6d6d6;
}
.panel-last { border-right: 0; }
.panel-body { height: 72px; }
.panel-name { text-align: center; line-height: 20px; white-space: nowrap; }
.panel-select .down { margin: 0 0 2px 2px; }
.tool { display: flex; align-items: center; justify-content: center; height: 36px; }
.sm { height: 24px; }
.more { gap: 6px; }
.modify {
  width: 44px;
  height: 72px;
  margin-left: 3px;
  display: flex;
  flex-direction: column;
  align-items: center;
  gap: 4px;
  background: linear-gradient(#c8e0f3, #aed0ef);
  border: 1px solid #1268b8;
}
.stack { display: flex; flex-direction: column; align-items: center; }
.stack .tool { width: 38px; }
.tool-on { background: #c3dcf1; border: 1px solid #1268b8; }
.clipboard {
  display: grid;
  grid-template: repeat(3, 24px) / 54px 24px;
}
.paste {
  grid-row: span 3;
  display: flex;
  flex-direction: column;
  align-items: center;
  gap: 2px;
  padding-top: 2px;
}
.geometry {
  display: grid;
  grid-template: repeat(3, 24px) / 72px 24px 34px;
  padding-left: 6px;
}
.cmd { display: flex; align-items: center; gap: 6px; }
.geometry .tool { justify-content: flex-start; }
.modify-tools { display: flex; gap: 5px; padding-left: 2px; }
.bigs { display: grid; grid-template: repeat(2, 36px) / repeat(4, 39px); }
.smalls { display: grid; grid-template: repeat(3, 24px) / repeat(3, 25px); margin-left: -3px; }
.view-tools { display: grid; grid-template: repeat(3, 24px) / 36px 24px; }
.view-tools .tool { justify-content: flex-start; padding-left: 6px; }
.measure { display: grid; }
.create { display: grid; grid-template: repeat(2, 36px) / repeat(2, 38px); padding-left: 3px; }

.options { height: 26px; flex: none; }

/* work area */
.work {
  flex: 1;
  min-height: 0;
  display: grid;
  grid-template-columns: 296px 301px 1fr;
  grid-template-rows: minmax(0, 1fr);
  border-top: 2px solid #ccc;
}
.dock {
  display: flex;
  flex-direction: column;
  min-height: 0;
  padding-right: 2px;
  border-right: 2px solid #ccc;
  background: #f0f0f0;
}
.dock-title { display: flex; justify-content: space-between; align-items: center; height: 20px; flex: none; padding-top: 2px; }
.dock-title.pb { padding-left: 4px; }
.close {
  width: 16px;
  height: 18px;
  background:
    linear-gradient(45deg, transparent 43%, #222 43% 57%, transparent 57%) center / 9px 9px no-repeat,
    linear-gradient(-45deg, transparent 43%, #222 43% 57%, transparent 57%) center / 9px 9px no-repeat;
}
.type-picker {
  display: flex;
  align-items: center;
  height: 72px;
  flex: none;
  border: 1px solid #ccc;
  border-left: 0;
  text-align: left;
}
.thumb {
  display: grid;
  place-items: center;
  width: 66px;
  height: 66px;
  border: 1px solid #ccc;
}
.type-name { flex: 1; padding-left: 4px; }
.filter { display: flex; align-items: center; height: 25px; flex: none; color: #000; }
.filter select {
  appearance: none;
  width: 210px;
  height: 23px;
  padding: 0 0 0 1px;
  font: inherit;
  border: 1px solid #aaa;
  border-left: 0;
  border-radius: 0;
  background:
    linear-gradient(45deg, transparent 42%, #444 42% 58%, transparent 58%) 196px 9px / 5px 5px no-repeat,
    linear-gradient(-45deg, transparent 42%, #444 42% 58%, transparent 58%) 200px 9px / 5px 5px no-repeat,
    #e2e2e2;
}
.edit-type { display: flex; align-items: center; gap: 5px; padding: 0 0 2px 6px; }
.grid-wrap { flex: 1; min-height: 0; display: flex; }
.grid-clip { width: 275px; overflow: hidden; background: #fff; }
.grid { width: 275px; table-layout: fixed; border-spacing: 0; color: #000; }
.c-name { width: 131px; }
.c-value { width: 132px; }
.c-link { width: 12px; }
.grid td, .grid th { height: 18px; padding: 0; line-height: 16px; white-space: nowrap; overflow: hidden; }
.grid td { border-bottom: 1px dotted #666; border-right: 1px dotted #666; padding-left: 2px; vertical-align: top; }
.grid td:first-child { padding-left: 5px; }
.grid .group th {
  background: #dadada;
  font-weight: 400;
  text-align: left;
}
.group b { float: right; width: 5px; margin: 5px 7px 0 0; }
.group b::before, .group b::after {
  content: "";
  display: block;
  width: 4px;
  height: 4px;
  border: solid #000;
  border-width: 1px 0 0 1px;
  transform: rotate(45deg);
}
.ro { color: #777; }
.grid button {
  display: block;
  width: 130px;
  height: 16px;
  margin: 1px 0 0 -1px;
  line-height: 12px;
  background: #e1e1e1;
  border: 1px solid #adadad;
  border-right-width: 2px;
  border-bottom-width: 2px;
}
.grid button:disabled { background: #ccc; border-color: #bfbfbf; color: #838383; }
.grid input {
  appearance: none;
  display: block;
  width: 13px;
  height: 13px;
  margin: 3px 0 0 1px;
  border: 1px solid #333;
  background: #fff;
}
.grid input:checked::before {
  content: "";
  display: block;
  width: 9px;
  height: 5px;
  margin: 2px 1px;
  border: solid #333;
  border-width: 0 0 1px 1px;
  transform: rotate(-45deg);
}
.vbar { display: flex; flex-direction: column; width: 16px; }
.thumb-v { flex: 607; background: #cdcdcd; }
.thumb-v + svg { margin-top: 58px; }
.dock-foot { display: flex; justify-content: space-between; height: 27px; flex: none; padding: 2px 2px 4px 0; }
.dock-foot a { color: #0a6fc8; line-height: 20px; }
.dock-foot button { width: 73px; background: #ccc; border: 1px solid #bfbfbf; color: #838383; }

/* project tree */
.tree, .tree ul { list-style: none; margin: 0; padding: 0; }
.tree { flex: 1; background: #fff; margin: 0 0 2px 2px; color: #000; }
.tree li { position: relative; }
.tree li::before {
  content: "";
  position: absolute;
  top: 0;
  bottom: 0;
  left: 8px;
  border-left: 1px dotted #999;
}
.tree li:last-child::before { bottom: auto; height: 9px; }
.tree > li:first-child::before { top: 9px; }
.tree ul { padding-left: 20px; }
.node { display: flex; align-items: center; height: 18px; white-space: nowrap; }
.node i { width: 15px; margin-left: 8px; border-top: 1px dotted #999; }
.exp {
  position: relative;
  width: 9px;
  height: 9px;
  margin-left: 4px;
  border: 1px solid #919191;
  background: linear-gradient(#35609c, #35609c) center / 5px 1px no-repeat, #f4f4f4;
}
.exp.plus {
  background:
    linear-gradient(#35609c, #35609c) center / 5px 1px no-repeat,
    linear-gradient(#35609c, #35609c) center / 1px 5px no-repeat,
    #f4f4f4;
}
.exp + i { width: 10px; margin-left: 0; }
.tree > li > .node i { width: 12px; }
.tree > li > .node .exp + i { width: 7px; }
.node span { padding: 0 3px; }
.node svg + span { margin-left: 3px; }
.picked { background: #e0e0e0; }

/* drawing area */
.view { display: flex; flex-direction: column; min-width: 0; }
.view-tabs { display: flex; justify-content: space-between; height: 20px; flex: none; background: #ccc; }
.view-tab { display: flex; align-items: center; width: 128px; padding: 2px 2px 0 5px; background: #fff; color: #000; }
.view-tab b { flex: 1; padding-left: 7px; }
.canvas { flex: 1; min-height: 0; display: flex; background: #fff; }
.sheet { flex: 1; padding: 76px 0 0 93px; overflow: hidden; }
.vbar-view { width: 11px; margin: 2px 0 0; background: #f0f0f0; }
.thumb-s { height: 17px; margin: auto 0; background: #cdcdcd; }
.w { fill: #fff; stroke: #000; }
.n { fill: none; stroke: #000; }
.wall { fill: none; stroke: #000; stroke-width: 5; }
.wall3 { fill: none; stroke: #000; stroke-width: 3; }
.dash { fill: none; stroke: #000; stroke-dasharray: 6 4; }
.route { fill: none; stroke: #0c8a12; stroke-dasharray: 6 6; }
.t { font: 9px "Liberation Sans", Arial, sans-serif; fill: #111; text-anchor: middle; }
.view-bar { display: flex; align-items: center; height: 19px; flex: none; margin-left: 2px; background: #f0f0f0; }
.scale { width: 76px; padding-left: 5px; color: #000; }
.vb { display: flex; justify-content: center; width: 21px; }
.hbar { flex: 1; display: flex; align-self: stretch; padding-left: 467px; }
.hbar span { width: 17px; background: #cdcdcd; }
.hend { margin-right: 12px; }
```
